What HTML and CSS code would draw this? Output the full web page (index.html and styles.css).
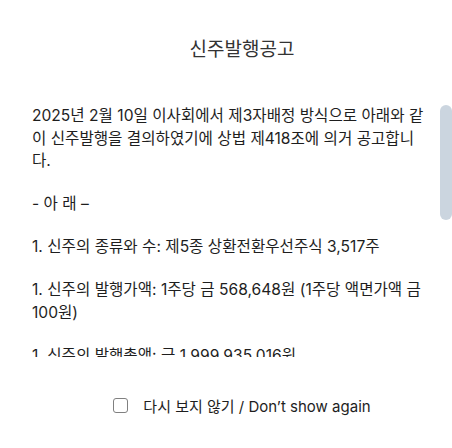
FILE: index.html
```html
<!DOCTYPE html>
<html lang="ko">
<head>
<meta charset="utf-8">
<link rel="stylesheet" href="styles.css">
</head>
<body>
<div class="dialog">
  <h1 class="title">신주발행공고</h1>
  <div class="scroll">
    <div class="content">
      <p>2025년 2월 10일 이사회에서 제3자배정 방식으로 아래와 같이 신주발행을 결의하였기에 상법 제418조에 의거 공고합니다.</p>
      <p>- 아 래 –</p>
      <p>1. 신주의 종류와 수: 제5종 상환전환우선주식 3,517주</p>
      <p>1. 신주의 발행가액: 1주당 금 568,648원 (1주당 액면가액 금 100원)</p>
      <p>1. 신주의 발행총액: 금 1,999,935,016원</p>
      <p>1. 신주의 배정방법: 제3자배정 방식</p>
      <p>1. 납입기일: 2025년 2월 26일</p>
      <p>1. 신주의 효력발생일: 납입기일 다음날</p>
      <p>2025년 2월 11일</p>
    </div>
    <div class="thumb"></div>
  </div>
  <label class="footer">
    <span class="box"></span>
    <span class="label">다시 보지 않기 / Don’t show again</span>
  </label>
</div>
</body>
</html>
```

FILE: styles.css
```css
html, body {
  margin: 0;
  padding: 0;
  background: #ffffff;
}
body {
  width: 452px;
  height: 448px;
  overflow: hidden;
  font-family: Inter, "Noto Sans CJK KR", sans-serif;
  color: #1e1e1e;
}
.dialog {
  display: flex;
  flex-direction: column;
  height: 448px;
  padding-left: 32px;
  box-sizing: border-box;
}
.title {
  margin: 0;
  padding-top: 37px;
  height: 105px;
  box-sizing: border-box;
  text-align: center;
  font-size: 19px;
  font-weight: 400;
  line-height: 26px;
  color: #333333;
  flex: none;
}
.scroll {
  position: relative;
  height: 252px;
  flex: none;
  overflow: hidden;
}
.content {
  padding-right: 24px;
  font-size: 15.6px;
  line-height: 22.5px;
}
.content p {
  margin: 0 0 20.5px;
}
.thumb {
  position: absolute;
  top: 0;
  right: 0;
  width: 12px;
  height: 115px;
  background: #cbd5df;
  border-radius: 6px;
}
.footer {
  display: flex;
  align-items: center;
  justify-content: center;
  margin-top: 37px;
  height: 22px;
  gap: 15px;
  font-size: 15px;
  color: #1e1e1e;
  flex: none;
}
.box {
  width: 13px;
  height: 13px;
  border: 1.5px solid #808080;
  border-radius: 3px;
}
```
